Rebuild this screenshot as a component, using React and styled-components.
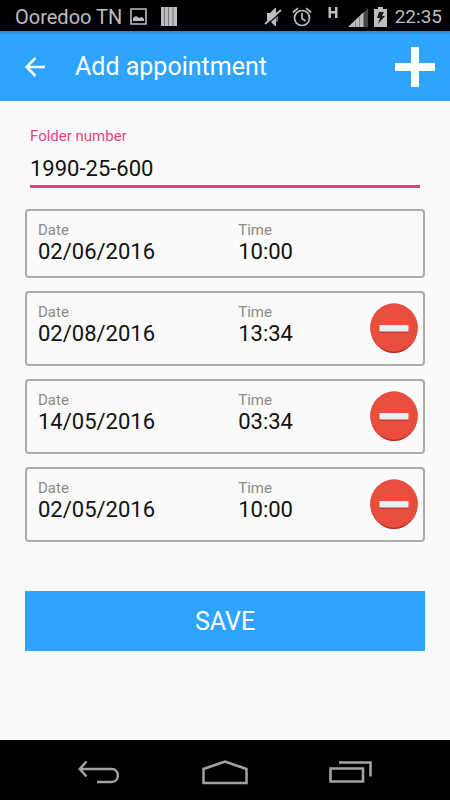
import React, { useState } from "react";
import styled, { createGlobalStyle } from "styled-components";

const GlobalStyle = createGlobalStyle`
  *, *::before, *::after { box-sizing: border-box; }
  body { margin: 0; background: #fafafa; font-family: Roboto, "Liberation Sans", sans-serif; }
  button, input { font: inherit; }
  svg { display: block; flex: none; }
`;

const Screen = styled.div`
  display: flex;
  flex-direction: column;
  min-height: 100vh;
  background: #fafafa;
`;

const StatusBar = styled.div`
  display: flex;
  align-items: center;
  justify-content: space-between;
  height: 31px;
  padding: 2px 8px 0 15px;
  background: #000;
  color: #bdbdbd;
  font-size: 20px;
  line-height: 28px;
`;

const StatusGroup = styled.div`
  display: flex;
  align-items: center;
`;

const StatusIcon = styled.svg`
  margin-left: ${(p) => p.$gap}px;
`;

const Clock = styled.span`
  margin-left: 8px;
  font-size: 19px;
`;

const AppBar = styled.header`
  display: flex;
  align-items: center;
  height: 70px;
  padding: 2px 15px 0;
  background: linear-gradient(#2b88d1, #2ea3ff 4px);
  color: #fff;
`;

const IconButton = styled.button`
  display: flex;
  align-items: center;
  justify-content: center;
  width: ${(p) => p.$size}px;
  height: ${(p) => p.$size}px;
  padding: 0;
  border: 0;
  background: none;
  color: inherit;
  cursor: pointer;
`;

const Title = styled.h1`
  flex: 1;
  margin: 0 0 0 20px;
  font-size: 25px;
  font-weight: 400;
  line-height: 32px;
`;

const Form = styled.form`
  display: flex;
  flex: 1;
  flex-direction: column;
  padding: 25px 25px 24px;
`;

const Field = styled.div`
  display: flex;
  flex-direction: column;
  margin: 0 5px 21px;
`;

const FieldLabel = styled.label`
  color: #e8437f;
  font-size: 15px;
  line-height: 20px;
`;

const FieldInput = styled.input`
  width: 100%;
  height: 42px;
  padding: 6px 0 0;
  border: 0;
  border-bottom: 3px solid #e73c7b;
  border-radius: 0;
  outline: 0;
  background: none;
  color: #111;
  font-size: 22px;
`;

const Appointments = styled.ul`
  display: flex;
  flex-direction: column;
  gap: 13px;
  margin: 0 0 49px;
  padding: 0;
  list-style: none;
`;

const Card = styled.li`
  display: grid;
  grid-template-columns: 13fr 12fr;
  align-items: start;
  position: relative;
  min-height: ${(p) => (p.$removable ? 75 : 69)}px;
  padding: 10px 0 0 11px;
  border: 2px solid #acacac;
  border-radius: 4px;
`;

const Detail = styled.div`
  display: flex;
  flex-direction: column;
`;

const DetailLabel = styled.span`
  color: #8a8a8a;
  font-size: 15px;
  line-height: 18px;
`;

const DetailValue = styled.span`
  color: #111;
  font-size: 22px;
  line-height: 26px;
`;

const RemoveButton = styled(IconButton)`
  position: absolute;
  top: 10px;
  right: 4px;
`;

const SaveButton = styled.button`
  height: 60px;
  padding: 0;
  border: 0;
  background: #2ea3ff;
  color: #fff;
  font-size: 25px;
  cursor: pointer;
`;

const NavBar = styled.nav`
  display: flex;
  align-items: center;
  justify-content: center;
  gap: 66px;
  height: 60px;
  padding-top: 3px;
  background: #000;
  color: #a3a3a3;
`;

const NavButton = styled.button`
  display: flex;
  align-items: center;
  justify-content: center;
  width: 60px;
  height: 48px;
  padding: 0;
  border: 0;
  background: none;
  color: inherit;
`;

const PictureIcon = () => (
  <StatusIcon $gap={8} width="17" height="17" viewBox="0 0 17 17" aria-hidden="true">
    <path d="M1 1h15v15H1z" fill="none" stroke="currentColor" strokeWidth="1.6" />
    <path d="M3 13V10l3-2 3 2 3-1 2 2v2z" fill="currentColor" />
  </StatusIcon>
);

const BarsIcon = () => (
  <StatusIcon $gap={14} width="16" height="19" viewBox="0 0 16 19" aria-hidden="true">
    <path d="M0 0h16v19H0z" fill="#777" />
    <path d="M0 0h3v19H0zM4 0h3v19H4zM8 0h3.500v19H8zM12.500 0H16v19h-3.500z" fill="currentColor" />
  </StatusIcon>
);

const MuteIcon = () => (
  <StatusIcon $gap={0} width="18" height="20" viewBox="0 0 18 20" aria-hidden="true">
    <path d="M3 6h3l5-5h1v18h-1l-5-5H3z" fill="currentColor" />
    <path d="M13 5.500v9" stroke="currentColor" strokeWidth="1.200" />
    <path d="M2 18.500 18 4.500" stroke="#000" strokeWidth="1.300" />
    <path d="M1 17 17 3" stroke="currentColor" strokeWidth="1.800" />
  </StatusIcon>
);

const AlarmIcon = () => (
  <StatusIcon $gap={10} width="20" height="20" viewBox="0 0 20 20" aria-hidden="true">
    <g fill="none" stroke="currentColor" strokeWidth="1.700">
      <circle cx="10" cy="11" r="7.500" />
      <path d="M10 6v5.500l3.500 2.500M.8 5.500 6 1.200M19.200 5.500 14 1.200" />
    </g>
  </StatusIcon>
);

const NetworkIcon = () => (
  <StatusIcon $gap={16} width="41" height="20" viewBox="0 0 41 20" aria-hidden="true">
    <path d="M.5 0H3v4h4V0h2.500v11H7V6.500H3V11H.5z" fill="currentColor" />
    <path d="M20 20 40 1v19z" fill="#444" />
    <path d="M20 20 35.500 5.300V20z" fill="currentColor" />
    <path d="M27.500 14v6M31.500 10v10" stroke="#888" />
  </StatusIcon>
);

const BatteryIcon = () => (
  <StatusIcon $gap={5} width="13" height="20" viewBox="0 0 13 20" aria-hidden="true">
    <path d="M4 0h5v2h4v18H0V2h4z" fill="currentColor" />
    <path d="M5 5h5L8 9h3l-7 8 2-6H3z" fill="#171717" />
  </StatusIcon>
);

const BackArrow = () => (
  <svg width="22" height="22" viewBox="0 0 22 22" aria-hidden="true">
    <path d="M21 11H3M11.500 2 2.500 11l9 9" fill="none" stroke="currentColor" strokeWidth="2.500" />
  </svg>
);

const PlusIcon = () => (
  <svg width="40" height="40" viewBox="0 0 40 40" aria-hidden="true">
    <path d="M16 0h8v16h16v8H24v16h-8V24H0v-8h16z" fill="currentColor" />
  </svg>
);

const RemoveIcon = () => (
  <svg width="48" height="50" viewBox="0 0 48 50" aria-hidden="true">
    <ellipse cx="24" cy="25.500" rx="23.500" ry="24.500" fill="#bd2c27" />
    <ellipse cx="24" cy="24.500" rx="23.800" ry="24.200" fill="#e84d3d" />
    <path d="M9.500 23h29v7h-29z" fill="#ba3d31" />
    <path d="M9.500 22h29v6.500h-29z" fill="#eceff0" />
  </svg>
);

const NavBack = () => (
  <svg width="42" height="24" viewBox="0 0 42 24" aria-hidden="true">
    <path d="M8.500 1.500 1.800 9l6.700 7.500M2 9h31.500c8.500 0 8.500 13 0 13H19" fill="none" stroke="currentColor" strokeWidth="2.500" />
  </svg>
);

const NavHome = () => (
  <svg width="46" height="26" viewBox="0 0 46 26" aria-hidden="true">
    <path d="M1.500 24V10L23 2.500 44.500 10v14z" fill="none" stroke="currentColor" strokeWidth="2.500" />
  </svg>
);

const NavRecent = () => (
  <svg width="44" height="22" viewBox="0 0 44 22" aria-hidden="true">
    <path d="M1.500 7.500h32.500v13H1.500zM10 1.500h31.500v14" fill="none" stroke="currentColor" strokeWidth="2.600" />
  </svg>
);

const initialAppointments = [
  { id: 1, date: "02/06/2016", time: "10:00" },
  { id: 2, date: "02/08/2016", time: "13:34" },
  { id: 3, date: "14/05/2016", time: "03:34" },
  { id: 4, date: "02/05/2016", time: "10:00" },
];

function AppointmentCard({ appointment, removable, onRemove }) {
  return (
    <Card $removable={removable}>
      <Detail>
        <DetailLabel>Date</DetailLabel>
        <DetailValue>{appointment.date}</DetailValue>
      </Detail>
      <Detail>
        <DetailLabel>Time</DetailLabel>
        <DetailValue>{appointment.time}</DetailValue>
      </Detail>
      {removable && (
        <RemoveButton type="button" $size={50} aria-label={`Remove ${appointment.date}`} onClick={onRemove}>
          <RemoveIcon />
        </RemoveButton>
      )}
    </Card>
  );
}

export default function App() {
  const [folder, setFolder] = useState("1990-25-600");
  const [appointments, setAppointments] = useState(initialAppointments);

  const add = () =>
    setAppointments((list) => [...list, { id: Date.now(), date: "02/05/2016", time: "10:00" }]);
  const remove = (id) => setAppointments((list) => list.filter((a) => a.id !== id));

  return (
    <>
      <GlobalStyle />
      <Screen>
        <StatusBar>
          <StatusGroup>
            <span>Ooredoo TN</span>
            <PictureIcon />
            <BarsIcon />
          </StatusGroup>
          <StatusGroup>
            <MuteIcon />
            <AlarmIcon />
            <NetworkIcon />
            <BatteryIcon />
            <Clock>22:35</Clock>
          </StatusGroup>
        </StatusBar>
        <AppBar>
          <IconButton type="button" $size={40} aria-label="Back">
            <BackArrow />
          </IconButton>
          <Title>Add appointment</Title>
          <IconButton type="button" $size={40} aria-label="Add" onClick={add}>
            <PlusIcon />
          </IconButton>
        </AppBar>
        <Form onSubmit={(e) => e.preventDefault()}>
          <Field>
            <FieldLabel htmlFor="folder">Folder number</FieldLabel>
            <FieldInput id="folder" value={folder} onChange={(e) => setFolder(e.target.value)} />
          </Field>
          <Appointments>
            {appointments.map((a, i) => (
              <AppointmentCard key={a.id} appointment={a} removable={i > 0} onRemove={() => remove(a.id)} />
            ))}
          </Appointments>
          <SaveButton type="submit">SAVE</SaveButton>
        </Form>
        <NavBar>
          <NavButton type="button" aria-label="Back">
            <NavBack />
          </NavButton>
          <NavButton type="button" aria-label="Home">
            <NavHome />
          </NavButton>
          <NavButton type="button" aria-label="Recent apps">
            <NavRecent />
          </NavButton>
        </NavBar>
      </Screen>
    </>
  );
}
